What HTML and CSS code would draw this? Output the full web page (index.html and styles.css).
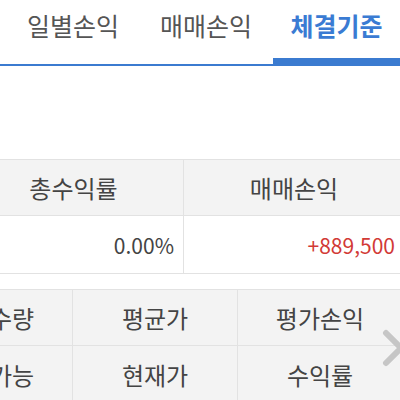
FILE: index.html
```html
<!DOCTYPE html>
<html lang="ko">
<head>
<meta charset="utf-8">
<link rel="stylesheet" href="styles.css">
</head>
<body>
<div class="page">
  <nav class="tabs">
    <div class="tab t1">일별손익</div>
    <div class="tab t2">매매손익</div>
    <div class="tab t3 active">체결기준</div>
  </nav>
  <div class="summary">
    <div class="cell head">총수익률</div>
    <div class="cell head">매매손익</div>
    <div class="cell val">0.00%</div>
    <div class="cell val red">+889,500</div>
  </div>
  <div class="cols">
    <div class="cell2">보유수량</div>
    <div class="cell2">평균가</div>
    <div class="cell2">평가손익</div>
    <div class="cell2">매도가능</div>
    <div class="cell2">현재가</div>
    <div class="cell2">수익률</div>
    <svg class="chev" width="24" height="44" viewBox="0 0 24 44"><polyline points="4,4 19,19 4,34" fill="none" stroke="#c6c6c6" stroke-width="6" stroke-linecap="round" stroke-linejoin="round"/></svg>
  </div>
</div>
</body>
</html>
```
FILE: styles.css
```css
html, body {
  margin: 0;
  padding: 0;
  background: #fff;
}
body {
  width: 400px;
  height: 400px;
  overflow: hidden;
  font-family: "Noto Sans CJK KR", "Noto Sans", sans-serif;
  color: #444;
}
.page {
  width: 400px;
}
.tabs {
  display: flex;
  height: 66px;
  border-bottom: 2px solid #3b7bd0;
  box-sizing: border-box;
}
.tab {
  font-size: 25px;
  color: #555;
  display: flex;
  align-items: center;
  justify-content: center;
  padding-bottom: 14px;
  box-sizing: border-box;
  height: 64px;
}
.t1 { width: 146px; }
.t2 { width: 120px; }
.t3 { width: 127px; margin-left: 7px; }
.tab.active {
  color: #3a7bd3;
  font-weight: 700;
  border-bottom: 6px solid #3b7bd0;
  padding-bottom: 8px;
}
.summary {
  margin-top: 93px;
  margin-left: -36px;
  width: 440px;
  display: grid;
  grid-template-columns: 220px 220px;
  grid-template-rows: 56px 57px;
  border-top: 1px solid #e2e2e2;
  border-bottom: 1px solid #e2e2e2;
}
.cell {
  font-size: 24px;
  display: flex;
  align-items: center;
  box-sizing: border-box;
}
.cell:nth-child(odd) {
  border-right: 1px solid #e2e2e2;
}
.head {
  background: #f3f3f3;
  justify-content: center;
  border-bottom: 1px solid #e2e2e2;
}
.val {
  font-size: 21px;
  justify-content: flex-end;
  padding-right: 9px;
}
.red { color: #d23a36; }
.cols {
  position: relative;
  margin-top: 15px;
  margin-left: -92px;
  width: 495px;
  display: grid;
  grid-template-columns: 165px 165px 165px;
  grid-template-rows: 56px 57px;
  border-top: 1px solid #e2e2e2;
  background: #f3f3f3;
}
.cell2 {
  font-size: 24px;
  display: flex;
  align-items: center;
  justify-content: center;
  border-right: 1px solid #e2e2e2;
  border-bottom: 1px solid #e2e2e2;
  box-sizing: border-box;
}
.chev {
  position: absolute;
  left: 474px;
  top: 39px;
}
```
